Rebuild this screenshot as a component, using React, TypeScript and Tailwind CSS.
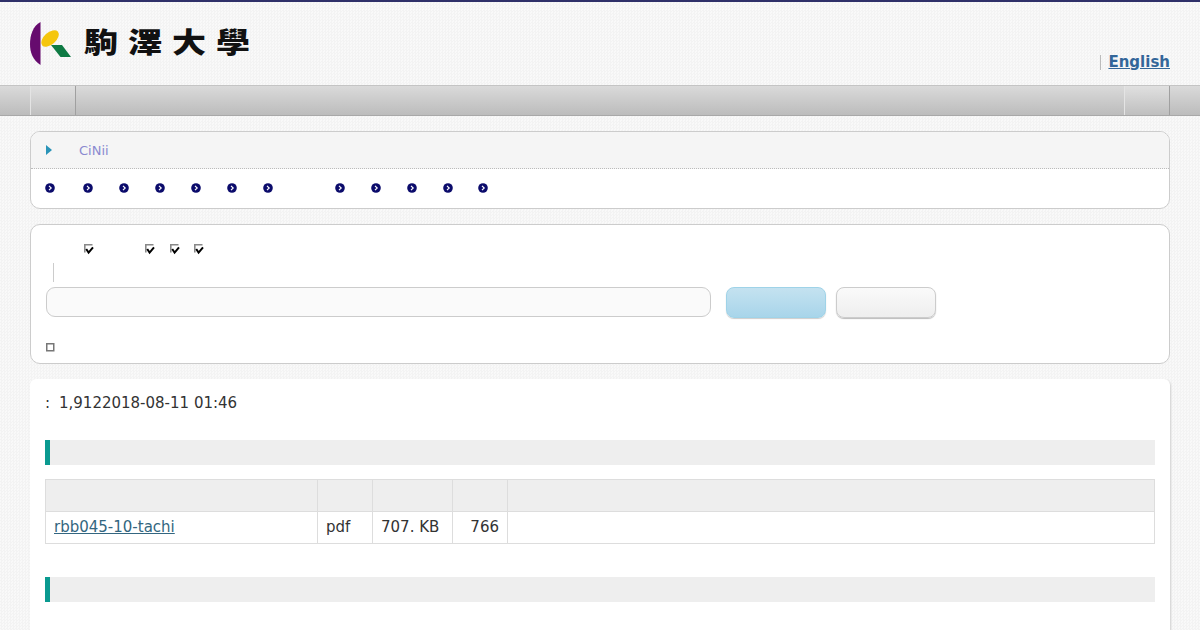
const arrowXs = [0, 38, 74, 110, 146, 182, 218, 290, 326, 362, 398, 433];
const checkGaps = [38, 51, 15, 14];
const dither = "bg-[conic-gradient(#f3f3f3_25%,#f9f9f9_0_50%,#f3f3f3_0_75%,#f9f9f9_0)] bg-[length:3px_3px]";

function Logo() {
  return (
    <svg width="44" height="46" viewBox="0 0 44 46" className="shrink-0">
      <path d="M10.5 0 C3 4 0 13 0 22 C0 31 3 38 10.5 43 Z" fill="#660b6e" />
      <ellipse cx="20" cy="16.5" rx="10.5" ry="6" transform="rotate(-42 20 16.5)" fill="#f5c60e" />
      <path d="M21 23 L32 23 L41 35 L30.5 35 Z" fill="#0e7a43" />
    </svg>
  );
}

function NavArrow() {
  return (
    <svg width="10" height="10" viewBox="0 0 10 10" className="block">
      <circle cx="5" cy="5" r="4.8" fill="#0b0b6b" />
      <path d="M4 2.8 L6.2 5 L4 7.2" fill="none" stroke="#fff" strokeWidth="1.2" />
    </svg>
  );
}

function CheckIcon({ checked = true }: { checked?: boolean }) {
  if (!checked) {
    return (
      <svg width="9" height="9" viewBox="0 0 9 9" className="block">
        <rect x="0.75" y="0.75" width="7" height="7" fill="#fff" stroke="#777" strokeWidth="1.5" />
      </svg>
    );
  }
  return (
    <svg width="10" height="11" viewBox="0 0 10 11" className="block">
      <path d="M8.5 0.8 H0.8 V8.5" fill="none" stroke="#888" strokeWidth="1.6" />
      <path d="M2.2 5 L4.6 8.6 L9 3.4" fill="none" stroke="#000" strokeWidth="2" />
    </svg>
  );
}

function SectionBar() {
  return <div className="h-[25px] border-l-[5px] border-[#0a9a90] bg-[#eeeeee]" />;
}

export default function App() {
  return (
    <div className={`h-[630px] overflow-hidden border-t-2 border-[#2f3069] font-['DejaVu_Sans',sans-serif] text-[#333] ${dither}`}>
      {/* header */}
      <header className="flex h-[83px] items-start justify-between px-[30px]">
        <div className="flex items-start pt-5">
          <Logo />
          <div className="ml-[10px] mt-[1px] origin-top scale-y-[0.82] whitespace-nowrap font-['Noto_Sans_CJK_TC',serif] text-[34px] leading-[44px] font-black tracking-[10px] text-[#111]">
            駒澤大學
          </div>
        </div>
        <div className="mt-[50px] flex items-center">
          <span className="mr-[7px] h-[15px] w-px bg-[#bbb]" />
          <a href="#" className="text-[15px] leading-5 font-bold text-[#336699] underline">English</a>
        </div>
      </header>

      {/* nav */}
      <nav className="flex h-[31px] justify-between border-t border-b border-t-[#c4c4c4] border-b-[#a8a8a8] bg-gradient-to-b from-[#dadada] to-[#bcbcbc] px-[30px]">
        <div className="w-[46px] border-x border-r-[#a0a0a0] border-l-[#e4e4e4] bg-gradient-to-b from-[#e0e0e0] to-[#bfbfbf]" />
        <div className="w-[46px] border-x border-r-[#a0a0a0] border-l-[#e4e4e4] bg-gradient-to-b from-[#e0e0e0] to-[#bfbfbf]" />
      </nav>

      <main className="flex flex-col px-[30px] pt-[15px]">
        {/* links */}
        <section className="h-[78px] overflow-hidden rounded-[10px] border border-[#cccccc] bg-white">
          <div className="flex h-[37px] items-center border-b border-dotted border-[#bbb] bg-[#f5f5f5] pl-[15px]">
            <svg width="6" height="10" viewBox="0 0 6 10"><path d="M0 0 L6 5 L0 10 Z" fill="#2a94b8" /></svg>
            <span className="ml-[27px] translate-y-px text-[13px] text-[#8a8ad0]">CiNii</span>
          </div>
          <div className="relative h-[39px]">
            {arrowXs.map((x) => (
              <span key={x} className="absolute top-[14px]" style={{ left: 14 + x }}>
                <NavArrow />
              </span>
            ))}
          </div>
        </section>

        {/* search */}
        <section className="mt-[15px] h-[140px] rounded-[10px] border border-[#cccccc] bg-white pl-[15px]">
          <div className="flex h-[30px] pt-[19px]">
            {checkGaps.map((gap, i) => (
              <span key={i} style={{ marginLeft: gap }}>
                <CheckIcon />
              </span>
            ))}
          </div>
          <div className="mt-[8px] ml-[7px] h-[19px] w-px bg-[#ccc]" />
          <div className="mt-[5px] flex items-start">
            <div className="h-[30px] w-[665px] rounded-[9px] border border-[#cccccc] bg-[#fafafa]" />
            <button className="ml-[15px] h-[31px] w-[100px] rounded-lg border border-[#9fd3e8] bg-gradient-to-b from-[#c4e2f0] to-[#a8d5ea] shadow-[0_1px_1px_#ccc]" />
            <button className="ml-[10px] h-[31px] w-[100px] rounded-lg border border-[#cccccc] bg-gradient-to-b from-[#fafafa] to-[#eeeeee] shadow-[0_1px_1px_#bbb]" />
          </div>
          <div className="mt-[25px]">
            <CheckIcon checked={false} />
          </div>
        </section>

        {/* detail */}
        <section className="mt-[15px] h-[300px] rounded-t-[6px] bg-white px-[15px] shadow-[1px_1px_2px_#d0d0d0]">
          <p className="flex pt-[14px] text-[15px] leading-[20px] text-[#333]">
            <span className="w-[14px]">:</span>
            <span>1,9122018-08-11 01:46</span>
          </p>
          <div className="mt-[27px]">
            <SectionBar />
          </div>
          <table className="mt-[14px] w-[1110px] table-fixed border-collapse text-[15px] text-[#333]">
            <colgroup>
              <col className="w-[272px]" />
              <col className="w-[55px]" />
              <col className="w-[80px]" />
              <col className="w-[55px]" />
              <col />
            </colgroup>
            <thead>
              <tr className="h-[32px] bg-[#eeeeee]">
                <th className="border border-[#dddddd]" />
                <th className="border border-[#dddddd]" />
                <th className="border border-[#dddddd]" />
                <th className="border border-[#dddddd]" />
                <th className="border border-[#dddddd]" />
              </tr>
            </thead>
            <tbody>
              <tr className="h-[32px]">
                <td className="border border-[#dddddd] px-2 py-0">
                  <a href="#" className="text-[#336680] underline">rbb045-10-tachi</a>
                </td>
                <td className="border border-[#dddddd] px-2 py-0">pdf</td>
                <td className="border border-[#dddddd] px-2 py-0 whitespace-nowrap">707. KB</td>
                <td className="border border-[#dddddd] px-2 py-0 text-right">766</td>
                <td className="border border-[#dddddd] px-2 py-0" />
              </tr>
            </tbody>
          </table>
          <div className="mt-[33px]">
            <SectionBar />
          </div>
        </section>
      </main>
    </div>
  );
}
